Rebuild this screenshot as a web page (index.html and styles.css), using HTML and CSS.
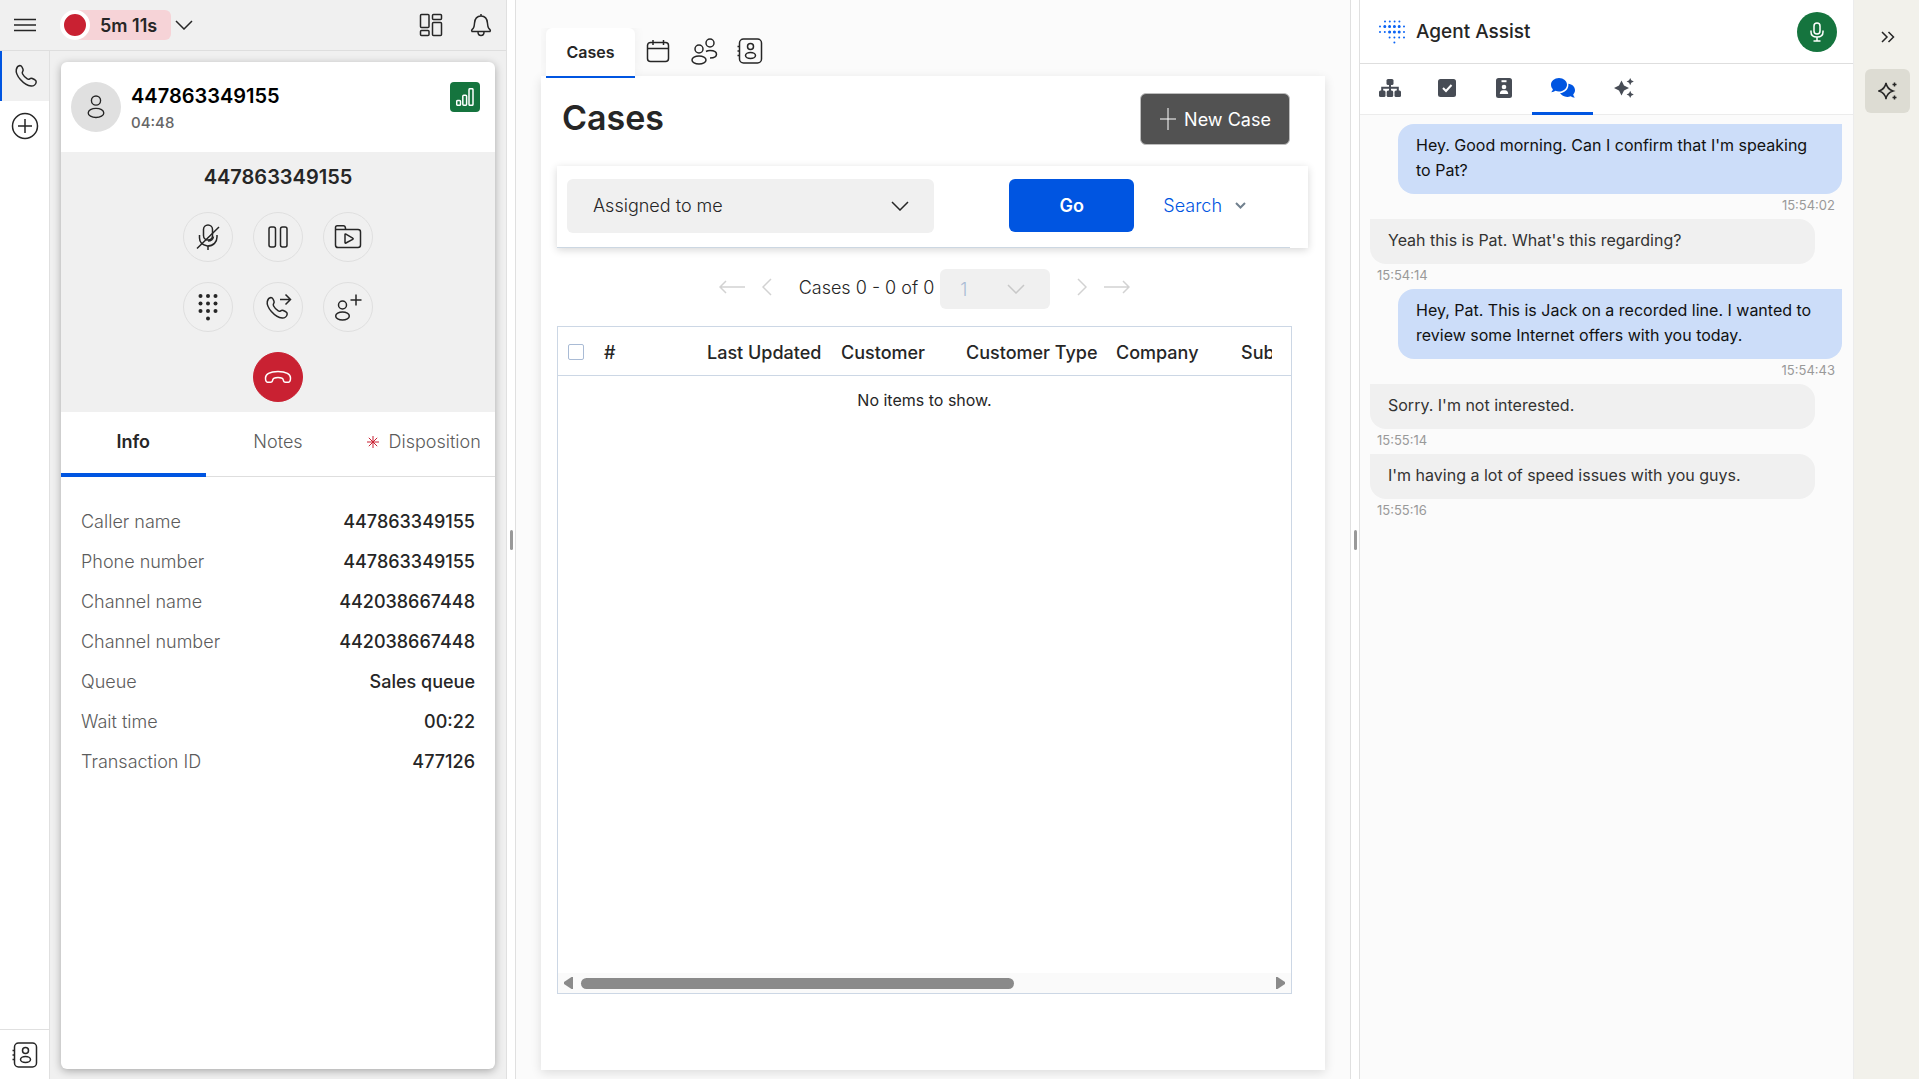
FILE: index.html
```html
<!DOCTYPE html>
<html lang="en">
<head>
  <meta charset="UTF-8">
  <meta name="viewport" content="width=device-width, initial-scale=1">
  <title>Agent Workspace</title>
  <link rel="stylesheet" href="styles.css">
</head>
<body>
  <!-- shared icons -->
  <svg class="sprite" aria-hidden="true">
    <symbol id="i-chevron" viewBox="0 0 18 10"><path d="M1 1l8 8 8-8"/></symbol>
    <symbol id="i-phone" viewBox="0 0 24 24"><path d="M2.300 5.500C2.800 3.200 4.200 1.700 5.900 1.500c1 0 1.600.6 2.100 1.500l1 2.200c.4 1 .1 1.700-.4 2.500-.5.800-.5 1.400 0 2.300 1 1.900 2.700 3.700 4.700 4.900 1 .6 1.600.5 2.400-.1.800-.6 1.700-.7 2.600-.3l2.100 1c1.200.6 1.900 1.400 1.800 2.500-.3 2.400-2.500 4.200-5 4.100C13 21.800 9.500 19.100 6.400 15.600 3.700 12.400 1.700 8.700 2.300 5.500z"/></symbol>
    <symbol id="i-person" viewBox="0 0 24 28"><circle cx="12" cy="7" r="5"/><ellipse cx="12" cy="20.500" rx="8.500" ry="5"/></symbol>
    <symbol id="i-contacts" viewBox="0 0 28 28"><rect x="3.500" y="2" width="22" height="24" rx="4"/><circle cx="14.500" cy="9.500" r="3"/><ellipse cx="14.500" cy="18.500" rx="5" ry="3"/><path d="M1.500 9.500h2M1.500 14h2M1.500 18.500h2"/></symbol>
  </svg>

  <div class="workspace">
    <section class="phone">
      <header class="topbar">
        <button class="icon-btn menu-btn" aria-label="Menu">
          <svg width="22" height="14" viewBox="0 0 22 14"><path d="M0 1.500h22M0 7h22M0 12.500h22"/></svg>
        </button>
        <button class="status">
          <span class="status-dot"></span>
          <span class="status-time">5m 11s</span>
          <svg width="18" height="10"><use href="#i-chevron"/></svg>
        </button>
        <div class="topbar-right">
          <button class="icon-btn" aria-label="Dashboard">
            <svg width="24" height="24" viewBox="0 0 24 24"><rect x="1.500" y="1.500" width="8.500" height="13" rx="1"/><rect x="1.500" y="17.500" width="8.500" height="5" rx="1"/><rect x="13.500" y="1.500" width="9" height="5" rx="1"/><rect x="13.500" y="9.500" width="9" height="13" rx="1"/></svg>
          </button>
          <button class="icon-btn" aria-label="Notifications">
            <svg width="22" height="24" viewBox="0 0 22 24"><path d="M11 1v2M2 18.500c-1-1 .2-2.200 1.300-3.300 1-1 1-2.700 1.200-5C4.800 6 7 3 11 3s6.200 3 6.500 7.200c.2 2.300.2 4 1.200 5 1.100 1.100 2.300 2.300 1.300 3.300zM8 19c0 2 1.200 3.500 3 3.500s3-1.500 3-3.500"/></svg>
          </button>
        </div>
      </header>

      <nav class="side">
        <button class="side-btn active" aria-label="Calls"><svg width="24" height="24"><use href="#i-phone"/></svg></button>
        <button class="side-btn" aria-label="New interaction">
          <svg width="28" height="28" viewBox="0 0 28 28"><circle cx="14" cy="14" r="12.500"/><path d="M14 7v14M7 14h14"/></svg>
        </button>
        <button class="side-btn side-bottom" aria-label="Contacts"><svg width="28" height="28"><use href="#i-contacts"/></svg></button>
      </nav>

      <div class="call-area">
        <article class="call-card">
          <header class="caller">
            <span class="avatar"><svg width="22" height="26"><use href="#i-person"/></svg></span>
            <div class="caller-text">
              <h2>447863349155</h2>
              <p>04:48</p>
            </div>
            <span class="signal">
              <svg width="18" height="18" viewBox="0 0 18 18"><rect x=".7" y="12.500" width="3.800" height="4.800" rx="1"/><rect x="6.800" y="7.200" width="3.800" height="10" rx="1"/><rect x="13" y=".7" width="4" height="16.600" rx="1"/></svg>
            </span>
          </header>

          <div class="controls">
            <h3>447863349155</h3>
            <div class="control-grid">
              <button aria-label="Mute">
                <svg width="26" height="28" viewBox="0 0 26 28"><rect x="8.500" y="2" width="9" height="15" rx="4.500"/><path d="M4.500 12v3c0 4 3 7 8 8M22 12v2c0 5-3.500 9-9.500 9M13 23v4M13 18c3 0 5-2 5.500-4.500M2 25.500L24 4"/></svg>
              </button>
              <button aria-label="Hold">
                <svg width="22" height="24" viewBox="0 0 22 24"><rect x="2" y="2" width="6.500" height="20" rx="2"/><rect x="13.500" y="2" width="6.500" height="20" rx="2"/></svg>
              </button>
              <button aria-label="Recordings">
                <svg width="28" height="26" viewBox="0 0 28 26"><path d="M1.500 6.500V3.500c0-1.200.6-1.800 1.800-1.800h6.200c1 0 1.500.4 1.700 1.300l.5 2.500H24c1.800 0 2.500.8 2.500 2.500v13c0 1.700-.8 2.500-2.500 2.500H4c-1.700 0-2.500-.8-2.500-2.500v-15.500h10.500M11 10.500v8c0 .6.400.8.900.5l6.800-3.700c.6-.3.600-.9 0-1.200l-6.800-4c-.5-.3-.9-.1-.9.400z"/></svg>
              </button>
              <button aria-label="Keypad">
                <svg class="solid" width="22" height="28" viewBox="0 0 22 28"><circle cx="3.500" cy="3" r="2"/><circle cx="11" cy="3" r="2"/><circle cx="18.500" cy="3" r="2"/><circle cx="3.500" cy="10.500" r="2"/><circle cx="11" cy="10.500" r="2"/><circle cx="18.500" cy="10.500" r="2"/><circle cx="3.500" cy="18" r="2"/><circle cx="11" cy="18" r="2"/><circle cx="18.500" cy="18" r="2"/><circle cx="11" cy="25.500" r="2"/></svg>
              </button>
              <button aria-label="Transfer">
                <svg width="28" height="28" viewBox="0 0 28 28"><use href="#i-phone" x="1" y="3" width="24" height="24"/><path d="M16 6.500h10.500M21.500 1.500l5 5-5 5"/></svg>
              </button>
              <button aria-label="Add participant">
                <svg width="28" height="28" viewBox="0 0 28 28"><circle cx="8.500" cy="12" r="4"/><ellipse cx="8.500" cy="23" rx="6.800" ry="4"/><path d="M22 1.500v11M16.500 7h11"/></svg>
              </button>
              <button class="hangup" aria-label="Hang up">
                <svg width="28" height="14" viewBox="0 0 28 14"><path d="M1.500 8c0-3.500 4-6.500 12.500-6.500S26.500 4.500 26.500 8c0 2.500-.5 4-2 4.200h-3c-1.300 0-2-.8-2.200-2.200-.2-1.600-1.200-2.500-5.300-2.500S9 8.400 8.700 10c-.2 1.400-.9 2.200-2.200 2.200h-3C2 12 1.500 10.500 1.500 8z"/></svg>
              </button>
            </div>
          </div>

          <div class="tabs" role="tablist">
            <button role="tab" aria-selected="true" class="active">Info</button>
            <button role="tab" aria-selected="false">Notes</button>
            <button role="tab" aria-selected="false"><svg class="required" width="12" height="12" viewBox="0 0 12 12"><path d="M6 0v12M0 6h12M1.800 1.800l8.400 8.400M10.200 1.800l-8.400 8.400"/></svg>Disposition</button>
          </div>

          <dl class="details">
            <div><dt>Caller name</dt><dd>447863349155</dd></div>
            <div><dt>Phone number</dt><dd>447863349155</dd></div>
            <div><dt>Channel name</dt><dd>442038667448</dd></div>
            <div><dt>Channel number</dt><dd>442038667448</dd></div>
            <div><dt>Queue</dt><dd>Sales queue</dd></div>
            <div><dt>Wait time</dt><dd>00:22</dd></div>
            <div><dt>Transaction ID</dt><dd>477126</dd></div>
          </dl>
        </article>
      </div>
    </section>

    <div class="splitter"><span></span></div>

    <main class="main">
      <nav class="main-tabs">
        <button class="main-tab active">Cases</button>
        <button class="main-tab" aria-label="Calendar">
          <svg width="24" height="24" viewBox="0 0 24 24"><rect x="1.500" y="3.500" width="21" height="19" rx="3"/><path d="M1.500 9.500h21M7 1v5M17.500 1v5"/></svg>
        </button>
        <button class="main-tab" aria-label="People">
          <svg width="28" height="28" viewBox="0 0 28 28"><circle cx="9" cy="12" r="4"/><ellipse cx="9" cy="23" rx="7" ry="4"/><circle cx="20" cy="6" r="4"/><path d="M16 14.500c1-.6 2.400-1 4-1 3.800 0 6.500 1.600 6.500 3.800s-2.500 3.700-6.500 3.700"/></svg>
        </button>
        <button class="main-tab" aria-label="Contacts"><svg width="28" height="28"><use href="#i-contacts"/></svg></button>
      </nav>

      <section class="panel">
        <div class="panel-head">
          <h1>Cases</h1>
          <button class="new-case">
            <svg width="18" height="22" viewBox="0 0 18 22"><path d="M9 0v22M1 11h16"/></svg>
            New Case
          </button>
        </div>

        <div class="filter">
          <form class="filter-row">
            <div class="select">
              <select aria-label="Case filter"><option>Assigned to me</option></select>
              <svg width="18" height="10"><use href="#i-chevron"/></svg>
            </div>
            <button type="button" class="go">Go</button>
            <a href="#" class="search">Search <svg width="11" height="7" viewBox="0 0 11 7"><path d="M1 1l4.500 4.500L10 1"/></svg></a>
          </form>
        </div>

        <div class="pager">
          <button disabled aria-label="First page"><svg width="26" height="14" viewBox="0 0 26 14"><path d="M26 7H1M7 1L1 7l6 6"/></svg></button>
          <button disabled aria-label="Previous page"><svg width="10" height="18" viewBox="0 0 10 18"><path d="M9 1L1 9l8 8"/></svg></button>
          <span class="pager-text">Cases 0 - 0 of 0</span>
          <div class="select select-small">
            <select disabled aria-label="Page"><option>1</option></select>
            <svg width="18" height="10"><use href="#i-chevron"/></svg>
          </div>
          <button disabled aria-label="Next page"><svg width="10" height="18" viewBox="0 0 10 18"><path d="M1 1l8 8-8 8"/></svg></button>
          <button disabled aria-label="Last page"><svg width="26" height="14" viewBox="0 0 26 14"><path d="M0 7h25M19 1l6 6-6 6"/></svg></button>
        </div>

        <div class="grid">
          <div class="grid-head">
            <table>
              <thead>
                <tr>
                  <th class="col-check"><input type="checkbox" aria-label="Select all"></th>
                  <th class="col-id">#</th>
                  <th class="col-updated">Last Updated</th>
                  <th class="col-customer">Customer</th>
                  <th class="col-type">Customer Type</th>
                  <th class="col-company">Company</th>
                  <th>Subject</th>
                </tr>
              </thead>
            </table>
          </div>
          <p class="empty">No items to show.</p>
          <div class="scrollbar">
            <svg width="9" height="12" viewBox="0 0 9 12"><path d="M9 0v12H7.500L0 7V5l7.500-5z"/></svg>
            <div class="track"><div class="thumb"></div></div>
            <svg width="9" height="12" viewBox="0 0 9 12"><path d="M0 0v12h1.500L9 7V5L1.500 0z"/></svg>
          </div>
        </div>
      </section>
    </main>

    <div class="splitter"><span></span></div>

    <aside class="assist">
      <header class="assist-head">
        <svg class="logo" width="26" height="24" viewBox="0 0 26 24"><g><path d="M6 1.500h15.500" stroke-dasharray="0 4.800"/><path d="M1 6.500h25" stroke-dasharray="0 4.800"/><path d="M1 12h25" stroke-dasharray="0 4.800"/><path d="M10.600 17.500h15" stroke-dasharray="0 4.800"/><path d="M15.400 22.500h0"/></g><g class="logo-bold"><path d="M5.800 6.500h15M10.600 12h10" stroke-dasharray="0 4.800"/></g></svg>
        <h2>Agent Assist</h2>
        <button class="mic" aria-label="Listening">
          <svg width="14" height="20" viewBox="0 0 14 20"><rect x="4" y="1" width="6" height="11" rx="3"/><path d="M1 8.500V10c0 3 2.400 5 6 5s6-2 6-5V8.500M7 15v4M3.500 19h7"/></svg>
        </button>
      </header>

      <nav class="assist-tabs">
        <button aria-label="Flow">
          <svg width="22" height="18" viewBox="0 0 22 18"><rect x="7.500" y="0" width="7" height="6" rx="1.500"/><rect x="0" y="11.500" width="6.500" height="6.500" rx="1.500"/><rect x="7.700" y="11.500" width="6.500" height="6.500" rx="1.500"/><rect x="15.500" y="11.500" width="6.500" height="6.500" rx="1.500"/><path class="line" d="M11 5v7M3.200 12V8.800h15.600V12"/></svg>
        </button>
        <button aria-label="Checklist">
          <svg width="18" height="18" viewBox="0 0 18 18"><rect width="18" height="18" rx="2.500"/><path class="cut" d="M5 9l3 3 5.500-6"/></svg>
        </button>
        <button aria-label="Customer">
          <svg width="16" height="20" viewBox="0 0 16 20"><rect width="16" height="20" rx="2.500"/><path class="cut" d="M5.500 3.200h5"/><circle class="hole" cx="8" cy="9" r="2.300"/><path class="hole" d="M3.800 16c0-2.300 1.300-3.700 3-3.700h2.400c1.700 0 3 1.400 3 3.700z"/></svg>
        </button>
        <button class="active" aria-label="Transcript">
          <svg width="24" height="20" viewBox="0 0 24 20"><path d="M8 0c4.500 0 8 3 8 6.700s-3.500 6.800-8 6.800c-1.300 0-2.500-.2-3.600-.7-1 .8-2.500 1.400-4.200 1.400.9-.9 1.500-2 1.700-3C.7 10 0 8.400 0 6.700 0 3 3.500 0 8 0z"/><path d="M17.300 5.800c3.800.3 6.700 3.100 6.700 6.500 0 1.600-.7 3.100-1.800 4.300.2 1.200.8 2.200 1.700 3-1.700 0-3.100-.5-4.200-1.300-1.100.4-2.300.7-3.500.7-3.200 0-5.900-1.600-7.100-3.900 4.700-.4 8.300-3.900 8.300-8.200z"/></svg>
        </button>
        <button aria-label="Suggestions">
          <svg width="20" height="20" viewBox="0 0 20 20"><path d="M7.500 2.500l2.500 5 5 2.500-5 2.500-2.500 5-2.500-5L0 10l5-2.500zM16.200 0l1.100 2.200 2.500 1.300-2.500 1.300-1.100 2.400-1.100-2.400-2.500-1.300 2.500-1.300zM16.200 12.800l1.100 2.400 2.500 1.300-2.500 1.300-1.100 2.200-1.100-2.200-2.500-1.300 2.500-1.300z"/></svg>
        </button>
      </nav>

      <div class="transcript">
        <div class="msg agent"><p>Hey. Good morning. Can I confirm that I'm speaking to Pat?</p><time>15:54:02</time></div>
        <div class="msg"><p>Yeah this is Pat. What's this regarding?</p><time>15:54:14</time></div>
        <div class="msg agent"><p>Hey, Pat. This is Jack on a recorded line. I wanted to review some Internet offers with you today.</p><time>15:54:43</time></div>
        <div class="msg"><p>Sorry. I'm not interested.</p><time>15:55:14</time></div>
        <div class="msg"><p>I'm having a lot of speed issues with you guys.</p><time>15:55:16</time></div>
      </div>
    </aside>

    <nav class="tools">
      <button aria-label="Collapse"><svg width="14" height="12" viewBox="0 0 14 12"><path d="M1 1l5 5-5 5M7.500 1l5 5-5 5"/></svg></button>
      <button class="active" aria-label="Agent Assist">
        <svg width="20" height="18" viewBox="0 0 20 18"><path d="M8 1c.8 4.500 2.500 6.500 7 8-4.500 1.300-6.200 3.500-7 8-.8-4.500-2.500-6.700-7-8 4.500-1.500 6.200-3.500 7-8z"/><path d="M16.500.5v4M14.500 2.500h4M16.500 13.500v4M14.500 15.500h4"/></svg>
      </button>
    </nav>
  </div>
</body>
</html>
```

FILE: styles.css
```css
* { box-sizing: border-box; margin: 0; padding: 0; }
body { font-family: Inter, "Liberation Sans", sans-serif; font-size: 18px; color: #262626; background: #fbfbfb; }
button, select { font: inherit; color: inherit; background: none; border: 0; }
button { cursor: pointer; display: flex; align-items: center; justify-content: center; }
svg { display: block; flex: none; fill: none; stroke: currentColor; stroke-width: 1.5px; }
.sprite { position: absolute; width: 0; height: 0; }
.solid { fill: currentColor; stroke: none; }

.workspace { display: grid; grid-template-columns: 507fr 9px 835fr 9px 494fr 65px; height: 100vh; overflow: hidden; }
.splitter { display: flex; align-items: center; justify-content: center; background: #fff; border-right: 1px solid #e0e0e0; }
.splitter span { width: 3px; height: 20px; border-radius: 2px; background: #999; }

/* phone column */
.phone { display: grid; grid-template: 51px 1fr / 50px 1fr; min-width: 0; background: #f0f0f0; border-right: 1px solid #e0e0e0; }
.topbar { grid-column: 1 / 3; display: flex; align-items: center; border-bottom: 1px solid #dedede; padding-right: 14px; }
.menu-btn { width: 50px; }
.status { margin-left: 10px; }
.status-dot { width: 30px; height: 30px; border: 4px solid #fff; border-radius: 50%; background: #c92132; z-index: 1; }
.status-time { height: 30px; margin: 0 4px 0 -15px; padding: 1px 14px 0 25px; line-height: 30px; font-weight: 600; background: #f6d3d7; border-radius: 6px; }
.topbar-right { display: flex; gap: 27px; margin-left: auto; }

.side { display: flex; flex-direction: column; background: #fff; border-right: 1px solid #e0e0e0; }
.side-btn { height: 50px; }
.side-btn.active { background: #f0f0f0; border-left: 2px solid #0055e1; }
.side-bottom { margin-top: auto; border-top: 1px solid #e0e0e0; }

.call-area { padding: 11px 11px 10px; display: flex; min-width: 0; }
.call-card { flex: 1; background: #fff; border-radius: 6px; overflow: hidden; box-shadow: 0 2px 8px rgba(0, 0, 0, .3); }
.caller { display: flex; height: 90px; padding: 20px 15px 0 10px; }
.avatar { display: flex; align-items: center; justify-content: center; width: 50px; height: 50px; border-radius: 50%; background: #e0e0e0; }
.caller-text { margin-left: 10px; padding-top: 1px; flex: 1; }
.caller-text h2 { font-size: 20px; line-height: 26px; font-weight: 600; color: #000; }
.caller-text p { font-size: 15px; line-height: 28px; font-weight: 500; color: #666; }
.signal { display: flex; align-items: center; justify-content: center; width: 30px; height: 30px; border-radius: 4px; background: #15743e; color: #fff; }

.controls { height: 260px; padding-top: 12px; background: #f0f0f0; text-align: center; }
.controls h3 { font-size: 20px; line-height: 26px; font-weight: 600; }
.control-grid { display: grid; grid-template-columns: repeat(3, 50px); gap: 20px; justify-content: center; margin-top: 22px; }
.control-grid button { height: 50px; border: 1px solid #dfdfdf; border-radius: 50%; }
.control-grid .hangup { grid-column: 2; background: #c92132; border-color: #c92132; color: #fff; }

.tabs { display: grid; grid-template-columns: repeat(3, 1fr); height: 65px; border-bottom: 1px solid #dedede; color: #5c5c5c; }
.tabs button { height: 65px; padding-bottom: 2px; border-bottom: 4px solid transparent; font-weight: 300; }
.tabs .active { color: #262626; font-weight: 600; border-color: #0055e1; }
.required { margin: 0 10px 0 2px; color: #c92132; stroke-width: 1px; }

.details { padding: 25px 20px; }
.details div { display: flex; justify-content: space-between; line-height: 40px; }
.details dt { color: #5c5c5c; font-weight: 300; }
.details dd { font-weight: 500; }

/* cases column */
.main { display: flex; flex-direction: column; min-width: 0; padding: 28px 25px 9px; border-right: 1px solid #e0e0e0; }
.main-tabs { display: flex; height: 48px; padding-left: 5px; }
.main-tab { width: 46px; height: 46px; }
.main-tab.active { width: 89px; height: 50px; font-size: 16px; font-weight: 600; background: #fff; border-radius: 6px 6px 0 0; border-bottom: 2px solid #0055e1; box-shadow: 0 -2px 12px rgba(0, 0, 0, .06); clip-path: inset(0 -14px 0 -5px); z-index: 1; }

.panel { flex: 1; display: flex; flex-direction: column; min-height: 0; padding: 17px 33px 76px 16px; background: #fff; box-shadow: 0 3px 10px rgba(0, 0, 0, .12); }
.panel-head { display: flex; align-items: center; justify-content: space-between; height: 52px; padding: 0 2px 0 5px; }
h1 { font-size: 34px; line-height: 48px; padding-bottom: 2px; font-weight: 600; }
.new-case { width: 150px; height: 52px; gap: 7px; background: #525252; border: 1px solid #bdbdbd; border-radius: 6px; color: #fff; }
.new-case svg { stroke-width: 1px; }

.filter { height: 82px; margin: 21px -16px 0 0; padding-right: 18px; box-shadow: 0 2px 8px rgba(0, 0, 0, .16); }
.filter-row { display: flex; align-items: center; height: 82px; padding: 0 44px 2px 10px; border-bottom: 1px solid #ccd7e2; }
.select { display: grid; flex: 0 1 367px; height: 54px; margin-right: auto; align-items: center; }
.select select { grid-area: 1 / 1; width: 100%; height: 100%; padding: 0 26px; appearance: none; background: #f0f0f0; border-radius: 6px; font-weight: 300; }
.select svg { grid-area: 1 / 1; justify-self: end; margin-right: 25px; pointer-events: none; }
.go { width: 125px; height: 53px; background: #0055e1; border-radius: 6px; color: #fff; font-weight: 600; }
.search { display: flex; align-items: center; gap: 13px; margin-left: 29px; color: #0055e1; font-weight: 300; text-decoration: none; }
.search svg { color: #71808e; stroke-width: 2px; }

.pager { display: flex; align-items: center; justify-content: center; margin-top: 17px; height: 44px; gap: 17px; }
.pager button { color: #d2d2d2; }
.pager-text { margin: 0 -11px 0 10px; font-weight: 300; }
.select-small { flex: 0 0 110px; height: 40px; margin: 0 10px 0 0; align-self: flex-end; color: #c8c8c8; }
.select-small select { padding: 0 20px; color: #a9bbd5; opacity: 1; }

.grid { flex: 1; display: flex; flex-direction: column; margin-top: 17px; border: 1px solid #ccd7e5; }
.grid-head { height: 49px; padding-right: 19px; border-bottom: 1px solid #ccd7e5; overflow: hidden; contain: paint; }
.grid-head table { table-layout: fixed; width: 100%; border-collapse: collapse; }
.grid-head th { height: 50px; padding: 0 0 0 10px; text-align: left; font-weight: 500; white-space: nowrap; overflow: hidden; }
.col-check { width: 36px; }
.col-id { width: 103px; }
.col-updated { width: 134px; }
.col-customer { width: 125px; }
.col-type { width: 150px; }
.col-company { width: 125px; }
.grid-head input { display: block; appearance: none; width: 16px; height: 16px; border: 1px solid #a9bbd5; border-radius: 2px; background: #fff; }
.empty { padding: 12px; font-size: 16px; line-height: 24px; text-align: center; }
.scrollbar { display: flex; align-items: center; gap: 8px; height: 20px; margin-top: auto; padding: 0 6px; background: #fafafa; }
.scrollbar svg { fill: #8a8a8a; stroke: none; }
.track { flex: 1; }
.thumb { width: 63%; height: 11px; border-radius: 6px; background: #8a8a8a; }

/* assist column */
.assist { display: flex; flex-direction: column; min-width: 0; border-right: 1px solid #ececec; }
.assist-head { display: flex; align-items: center; height: 64px; padding: 0 16px 0 19px; background: #fff; border-bottom: 1px solid #dedede; }
.assist-head h2 { margin-left: 11px; font-size: 19px; font-weight: 500; }
.logo { color: #0a64f5; stroke-linecap: round; stroke-width: 2px; }
.logo-bold { stroke-width: 3px; }
.mic { width: 40px; height: 40px; margin-left: auto; border-radius: 50%; background: #15743e; color: #fff; }
.assist-tabs { display: flex; height: 51px; padding-left: 1px; background: #fff; border-bottom: 1px solid #ececec; color: #474c55; }
.assist-tabs button { width: 57px; height: 51px; border-bottom: 3px solid transparent; }
.assist-tabs .active { width: 61px; margin-right: 2px; color: #0055e1; border-color: #0055e1; }
.assist-tabs svg { fill: currentColor; stroke: none; }
.assist-tabs .line { fill: none; stroke: currentColor; stroke-width: 2px; }
.assist-tabs .cut { fill: none; stroke: #fff; stroke-width: 2px; }
.assist-tabs .hole { fill: #fff; }

.transcript { padding: 9px 11px 9px 10px; font-size: 16px; }
.msg { margin-right: 27px; }
.msg p { padding: 9px 18px 11px; line-height: 25px; background: #f0f0f0; border-radius: 0 16px 16px 16px; color: #333; }
.msg time { display: block; padding: 0 7px 2px; line-height: 23px; font-size: 13px; color: #999; }
.msg.agent { margin: 0 0 0 28px; }
.msg.agent p { background: #ccddf9; border-radius: 16px 0 16px 16px; color: #111; }
.msg.agent time { text-align: right; }

.tools { padding: 17px 9px 0 11px; background: #f2f1eb; }
.tools button { width: 100%; height: 40px; }
.tools .active { height: 44px; margin-top: 12px; border-radius: 6px; background: #dddcd3; }
```
